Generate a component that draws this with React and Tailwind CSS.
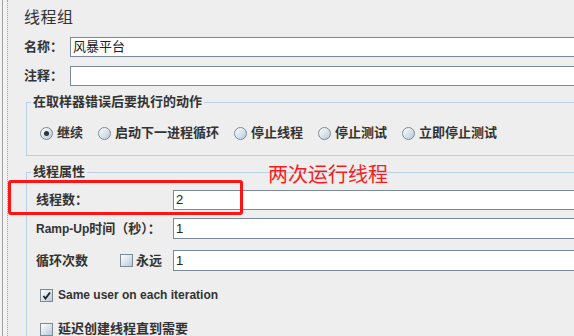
import React from "react";

const font = "font-['Liberation_Sans','Noto_Sans_CJK_SC',sans-serif]";

const Radio = ({ checked, label }) => (
  <div className="flex items-center gap-[4px]">
    <span className="w-[13px] h-[13px] rounded-full border border-[#7a8a99] bg-linear-to-br from-white to-[#b8c9da] flex items-center justify-center">
      {checked && <span className="w-[5px] h-[5px] rounded-full bg-[#333]" />}
    </span>
    <span className="text-[13px] font-bold text-[#333] leading-[16px]">{label}</span>
  </div>
);

const Checkbox = ({ checked }) => (
  <span className="w-[13px] h-[13px] border border-[#7a8a99] bg-linear-to-br from-white to-[#b8c9da] flex items-center justify-center shrink-0">
    {checked && (
      <svg width="9" height="9" viewBox="0 0 9 9">
        <path d="M1.5 5 L3.5 7.5 L8 1.5" stroke="#222" strokeWidth="1.8" fill="none" />
      </svg>
    )}
  </span>
);

const Field = ({ value, className = "" }) => (
  <div
    className={`flex-1 h-[20px] bg-white border-y border-l border-[#7a8a99] pl-[2px] flex items-center text-[13px] text-[#222] ${className}`}
  >
    {value}
  </div>
);

export default function App() {
  return (
    <div className={`relative w-[574px] h-[336px] overflow-hidden bg-[#eeeeee] flex ${font}`}>
      {/* left splitter strip */}
      <div className="flex shrink-0">
        <div className="w-[2px] bg-[#f2f2f2]" />
        <div className="w-[1px] bg-[#a3a3a3]" />
        <div className="w-[4px] bg-[#f2f2f2]" />
        <div className="w-[1px] border-l border-dotted border-[#9aa5b0]" />
        <div className="w-[2px]" />
      </div>

      <div className="flex-1 flex flex-col">
        <div className="pt-[8px] pl-[14px] h-[28px] text-[16px] leading-[20px] tracking-[0.5px] text-[#333]">
          线程组
        </div>

        <div className="mt-[9px] flex items-center pl-[14px]">
          <span className="w-[46px] text-[13px] font-bold text-[#333]">名称：</span>
          <Field value="风暴平台" />
        </div>
        <div className="mt-[9px] flex items-center pl-[14px]">
          <span className="w-[46px] text-[13px] font-bold text-[#333]">注释：</span>
          <Field value="" />
        </div>

        {/* 取样器错误后动作 */}
        <fieldset className="mt-[8px] ml-[16px] border-y border-l border-r-0 border-[#b8cfe5] px-0 pb-[14px]">
          <legend className="ml-[4px] px-[2px] text-[13px] font-bold text-[#333] leading-[16px]">
            在取样器错误后要执行的动作
          </legend>
          <div className="pt-[15px] pl-[13px] flex items-center gap-[15px]">
            <Radio checked label="继续" />
            <Radio label="启动下一进程循环" />
            <Radio label="停止线程" />
            <Radio label="停止测试" />
            <Radio label="立即停止测试" />
          </div>
        </fieldset>

        {/* 线程属性 */}
        <fieldset className="mt-[8px] ml-[16px] flex-1 border-t border-l border-r-0 border-b-0 border-[#b8cfe5] px-0">
          <legend className="ml-[4px] px-[2px] text-[13px] font-bold text-[#333] leading-[16px]">
            线程属性
          </legend>
          <div className="pl-[9px] flex flex-col">
            <div className="mt-[10px] flex items-center">
              <span className="w-[137px] text-[13px] font-bold text-[#333]">线程数：</span>
              <Field value="2" />
            </div>
            <div className="mt-[8px] flex items-center">
              <span className="w-[137px] text-[13px] font-bold text-[#333]">
                <span className="text-[12px]">Ramp-Up</span>时间（秒）：
              </span>
              <Field value="1" className="h-[21px]" />
            </div>
            <div className="mt-[11px] flex items-center">
              <span className="w-[84px] text-[13px] font-bold text-[#333]">循环次数</span>
              <Checkbox />
              <span className="ml-[3px] w-[37px] text-[13px] font-bold text-[#333]">永远</span>
              <Field value="1" className="h-[21px]" />
            </div>
            <div className="mt-[16px] pl-[4px] flex items-center gap-[5px] h-[16px]">
              <Checkbox checked />
              <span className="text-[12px] font-bold text-[#333]">Same user on each iteration</span>
            </div>
            <div className="mt-[18px] pl-[4px] flex items-center gap-[5px] h-[16px]">
              <Checkbox />
              <span className="text-[13px] font-bold text-[#333]">延迟创建线程直到需要</span>
            </div>
          </div>
        </fieldset>
      </div>

      {/* annotations */}
      <div className="absolute left-[8px] top-[180px] w-[235px] h-[35px] border-[3px] border-[#ff1414] rounded-[3px]" />
      <div className="absolute left-[268px] top-[162px] text-[20px] leading-[24px] text-[#ff1a1a] font-['Noto_Sans_CJK_SC',sans-serif]">
        两次运行线程
      </div>
    </div>
  );
}
